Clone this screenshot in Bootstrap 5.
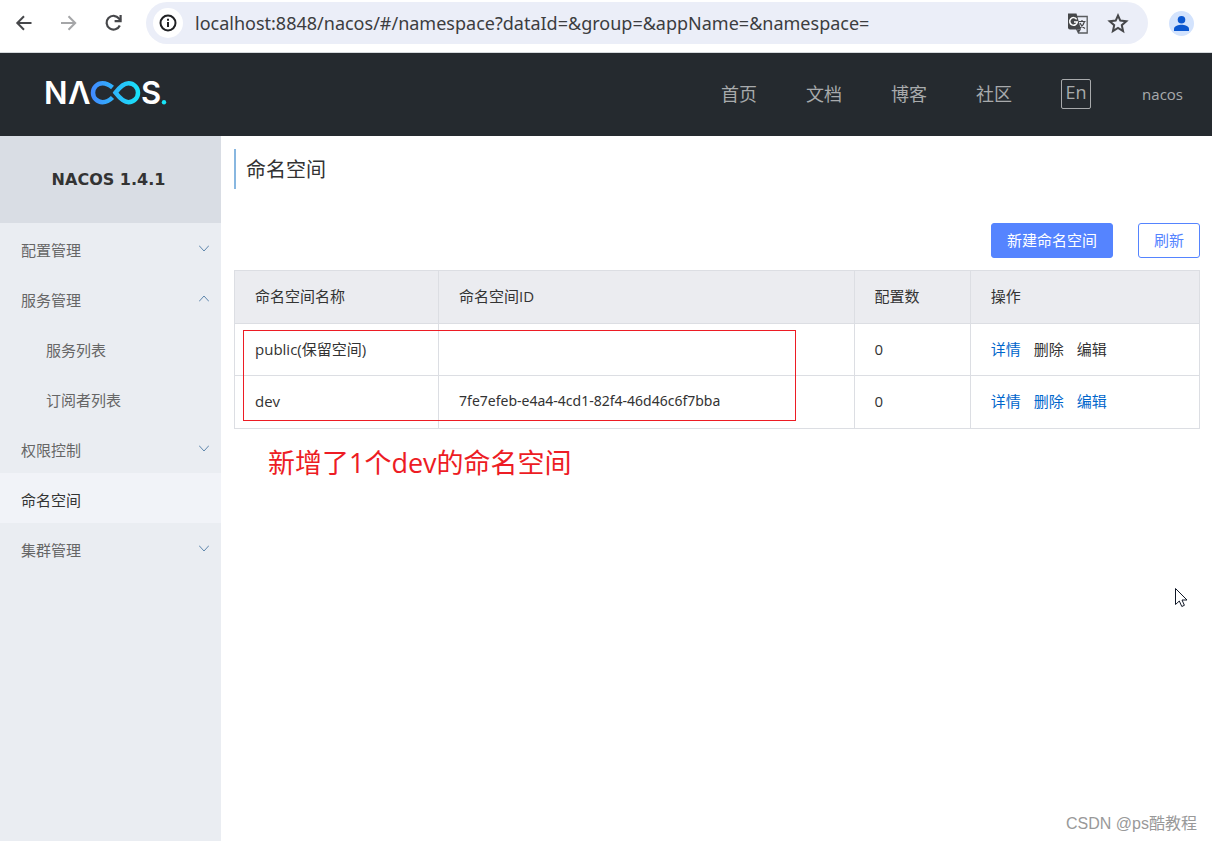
<!DOCTYPE html>
<html lang="zh-CN">
<head>
<meta charset="utf-8">
<meta name="viewport" content="width=device-width, initial-scale=1">
<title>Nacos</title>
<link href="https://cdn.jsdelivr.net/npm/bootstrap@5.3.0/dist/css/bootstrap.min.css" rel="stylesheet">
<style>
  body { font-family: "Open Sans", "Noto Sans CJK SC", sans-serif; font-size: 15px; line-height: 20px; color: #333; }
  a { text-decoration: none; }
  svg { display: block; flex: none; }

  /* browser toolbar */
  .toolbar { height: 53px; padding: 2px 18px 8px 12px; border-bottom: 1px solid #d5d9dc; }
  .tool-btn { width: 24px; height: 24px; }
  .tool-group { gap: 21px; }
  .address { height: 42px; margin-left: 20px; margin-right: 21px; padding: 0 18px 0 6px; background: #ebeef8; }
  .site-info { width: 30px; height: 30px; margin-left: 1px; }
  .address input { margin: 0 16px 0 12px; font-family: "Noto Sans", sans-serif; font-size: 18px; color: #3c3d40; line-height: 26px; }
  .avatar { width: 25px; height: 25px; background: #d3e3fd; }

  /* site header */
  .site-head { height: 83px; padding: 0 29px 2px 45px; background: #252a2f; }
  .brand { color: #fff; font-family: Inter, sans-serif; font-weight: 600; font-size: 31px; line-height: 40px; }
  .site-nav { gap: 49px; }
  .site-nav a { color: #a8aaac; font-size: 18px; line-height: 26px; }
  .site-nav .user-link { margin-left: 2px; font-size: 15px; }
  .lang-btn { width: 30px; height: 30px; padding: 0 0 4px; border: 1px solid #a8aaac; border-radius: 2px; color: #a8aaac; font-size: 18px; line-height: 24px; }

  /* sidebar */
  .side { width: 221px; background: #eaedf2; }
  .side-title { height: 87px; padding-right: 4px; background: #d9dde4; font-family: "DejaVu Sans", sans-serif; font-size: 16px; line-height: 24px; font-weight: 700; }
  .side .nav-link { height: 50px; padding: 3px 12px 0 21px; color: #666; }
  .side .nav-link.sub-item { padding-left: 46px; }
  .side .nav-link.active { background: #f1f3f8; color: #333; }
  .side svg { margin-bottom: 3px; }

  /* content */
  .content { padding: 13px 12px 0 13px; }
  .page-title { height: 40px; padding-left: 10px; border-left: 2px solid #88b7e0; font-size: 20px; line-height: 42px; font-weight: 400; }
  .actions { gap: 25px; margin-top: 34px; margin-bottom: 12px; }
  .btn-ns { --bs-btn-padding-x: 15px; --bs-btn-padding-y: 0; --bs-btn-font-size: 15px; --bs-btn-border-radius: 3px; --bs-btn-line-height: 33px; height: 35px;
    --bs-btn-border-color: #5584ff; --bs-btn-hover-border-color: #3e71f7; }
  .btn-fill { --bs-btn-color: #fff; --bs-btn-bg: #5584ff; --bs-btn-hover-color: #fff; --bs-btn-hover-bg: #3e71f7; }
  .btn-line { --bs-btn-color: #5584ff; --bs-btn-bg: #fff; --bs-btn-hover-color: #3e71f7; --bs-btn-hover-bg: #f3f6ff; }
  .ns-table { table-layout: fixed; border-color: #dcdee3; color: #333; }
  .ns-table th, .ns-table td { height: 52px; padding: 0 20px 2px; vertical-align: middle; font-weight: 400; }
  .ns-table th, .ns-table tr:last-child td { height: 53px; }
  .ns-table th { background: #ebecf0; }
  .ns-table .ns-id { font-family: "Noto Sans", sans-serif; font-size: 14px; }
  .ns-table .ops { display: flex; gap: 13px; }
  .ns-table a { color: #06c; }
  .outline-box { top: 60px; left: 9px; width: 553px; height: 91px; border: 1px solid #ed1c24; }
  .remark { margin: 14px 0 0 34px; color: #ed1c24; font-size: 27px; line-height: 40px; }
  .pointer { right: 24px; top: 587px; }
  .watermark { right: 15px; bottom: 5px; color: #999; font: 16px/24px "Liberation Sans", "Noto Sans CJK SC", sans-serif; }
</style>
</head>
<body class="d-flex flex-column min-vh-100 position-relative bg-white">
<div class="toolbar d-flex align-items-center">
  <div class="tool-group d-flex">
    <button class="tool-btn btn p-0 border-0" aria-label="后退"><svg width="24" height="24" fill="none" stroke="#46474a" stroke-width="2"><path d="M19.500 12H5.500M12 5.300L5.300 12l6.700 6.700"/></svg></button>
    <button class="tool-btn btn p-0 border-0" aria-label="前进"><svg width="24" height="24" fill="none" stroke="#a5a6a8" stroke-width="2"><path d="M4 12h14M11.500 5.300l6.700 6.700-6.700 6.700"/></svg></button>
    <button class="tool-btn btn p-0 border-0" aria-label="刷新"><svg width="24" height="24" fill="none" stroke="#46474a" stroke-width="2.200"><path d="M17.800 14.500A6.900 6.900 0 1 1 17 7.500l1.500 1.800"/><path d="M18.600 4v6.200h-6"/></svg></button>
  </div>
  <div class="address rounded-pill flex-grow-1 d-flex align-items-center">
    <span class="site-info rounded-circle bg-white d-flex flex-shrink-0 align-items-center justify-content-center">
      <svg width="18" height="18" fill="none" stroke="#202124" stroke-width="2"><circle cx="9" cy="9" r="7.500"/><path d="M9 8v5M9 4.800v2"/></svg>
    </span>
    <input class="form-control border-0 bg-transparent shadow-none p-0" type="text" aria-label="地址" value="localhost:8848/nacos/#/namespace?dataId=&amp;group=&amp;appName=&amp;namespace=">
    <button class="btn p-0 border-0 me-3" aria-label="翻译"><svg width="24" height="24" viewBox="0 0 24 24"><path d="M10 5.500h11.200V22H12.500l-2-4" fill="none" stroke="#5a5c5f" stroke-width="1.300"/><path d="M2 2.500h8.500L15 18.500H4a2 2 0 0 1-2-2z" fill="#46474a"/><path d="M10.700 8.300A3.800 3.800 0 1 0 11.300 11H8" fill="none" stroke="#fff" stroke-width="1.500"/><path d="M12.500 10.500h7M16 9v1.500M18.500 10.500c-.7 3-2.500 5-4.500 6.500M14 12c1 2.500 3 4.500 5 5.500" fill="none" stroke="#46474a" stroke-width="1.200"/><path d="M12.500 22l2.500-3.500h-3.500z" fill="#46474a"/></svg></button>
    <button class="btn p-0 border-0" aria-label="收藏"><svg width="24" height="24" viewBox="0 0 24 24" fill="none" stroke="#46474a" stroke-width="2"><path d="M12 4.500l2.300 5.100 6 .6-4.500 4 1.300 6-5.100-3.200-5.100 3.200 1.300-6-4.500-4 6-.6z"/></svg></button>
  </div>
  <button class="avatar btn p-0 border-0 rounded-circle" aria-label="账户"><svg width="25" height="25" fill="#0b57d0"><circle cx="12.500" cy="8.700" r="3.800"/><path d="M5 20v-2.200c0-2.700 4.800-4 7.500-4s7.500 1.300 7.500 4V20z"/></svg></button>
</div>

<header class="site-head navbar navbar-expand flex-nowrap justify-content-between">
  <a class="brand" href="#" aria-label="Nacos">
    <svg width="124" height="48" viewBox="0 0 124 48">
      <defs><linearGradient id="loop" gradientUnits="userSpaceOnUse" x1="46" y1="0" x2="95" y2="0"><stop offset="0" stop-color="#4289ff"/><stop offset="1" stop-color="#17e5f8"/></linearGradient></defs>
      <text x="-1" y="34" fill="#fff">N</text>
      <text x="23" y="34" fill="#fff">Λ</text>
      <path d="M67.500 17.500C64 14.500 61 13.200 57.500 13.200a9.500 9.500 0 0 0 0 19c3.500 0 6.500-1.200 10-4.700M70.500 22.700C75.500 16 79 13.200 83.500 13.200a9.500 9.500 0 0 1 0 19c-4.500 0-8-3-13-9.500z" fill="none" stroke="url(#loop)" stroke-width="4.500"/>
      <text x="96" y="34" fill="#fff">S</text>
      <circle cx="119" cy="32.300" r="2.200" fill="#17e5f8"/>
    </svg>
  </a>
  <nav class="site-nav d-flex align-items-center">
    <a href="#">首页</a><a href="#">文档</a><a href="#">博客</a><a href="#">社区</a>
    <button class="lang-btn bg-transparent" type="button">En</button>
    <a class="user-link" href="#">nacos</a>
  </nav>
</header>

<div class="d-flex flex-grow-1">
  <aside class="side flex-shrink-0">
    <div class="side-title d-flex align-items-center justify-content-center">NACOS 1.4.1</div>
    <nav class="nav flex-column flex-nowrap">
      <a class="nav-link d-flex align-items-center justify-content-between" href="#">配置管理 <svg width="10" height="7" fill="none" stroke="#5f86ac"><path d="M0 .5l5 5.500 5-5.500"/></svg></a>
      <a class="nav-link d-flex align-items-center justify-content-between" href="#">服务管理 <svg width="10" height="7" fill="none" stroke="#5f86ac"><path d="M0 6.500L5 1l5 5.500"/></svg></a>
      <a class="nav-link sub-item d-flex align-items-center" href="#">服务列表</a>
      <a class="nav-link sub-item d-flex align-items-center" href="#">订阅者列表</a>
      <a class="nav-link d-flex align-items-center justify-content-between" href="#">权限控制 <svg width="10" height="7" fill="none" stroke="#5f86ac"><path d="M0 .5l5 5.500 5-5.500"/></svg></a>
      <a class="nav-link active d-flex align-items-center" href="#">命名空间</a>
      <a class="nav-link d-flex align-items-center justify-content-between" href="#">集群管理 <svg width="10" height="7" fill="none" stroke="#5f86ac"><path d="M0 .5l5 5.500 5-5.500"/></svg></a>
    </nav>
  </aside>

  <main class="content flex-grow-1">
    <h1 class="page-title m-0">命名空间</h1>
    <div class="actions d-flex justify-content-end">
      <button class="btn btn-ns btn-fill" type="button">新建命名空间</button>
      <button class="btn btn-ns btn-line" type="button">刷新</button>
    </div>
    <div class="position-relative">
      <table class="ns-table table table-bordered m-0">
        <colgroup><col style="width:21.150%"><col style="width:43.050%"><col style="width:12.050%"><col></colgroup>
        <thead><tr><th scope="col">命名空间名称</th><th scope="col">命名空间ID</th><th scope="col">配置数</th><th scope="col">操作</th></tr></thead>
        <tbody>
          <tr><td>public(保留空间)</td><td></td><td>0</td><td><div class="ops"><a href="#">详情</a><span>删除</span><span>编辑</span></div></td></tr>
          <tr><td>dev</td><td class="ns-id">7fe7efeb-e4a4-4cd1-82f4-46d46c6f7bba</td><td>0</td><td><div class="ops"><a href="#">详情</a><a href="#">删除</a><a href="#">编辑</a></div></td></tr>
        </tbody>
      </table>
      <div class="outline-box position-absolute"></div>
    </div>
    <p class="remark">新增了1个dev的命名空间</p>
  </main>
</div>

<svg class="pointer position-absolute" width="13" height="21" viewBox="0 0 13 21" fill="#fff" stroke="#111827"><path d="M.5 1.500v16l3.800-3.500 2.500 5.500 2.600-1.200L7 13h5z"/></svg>
<div class="watermark position-absolute">CSDN @ps酷教程</div>
<script src="https://cdn.jsdelivr.net/npm/bootstrap@5.3.0/dist/js/bootstrap.bundle.min.js"></script>
</body>
</html>
